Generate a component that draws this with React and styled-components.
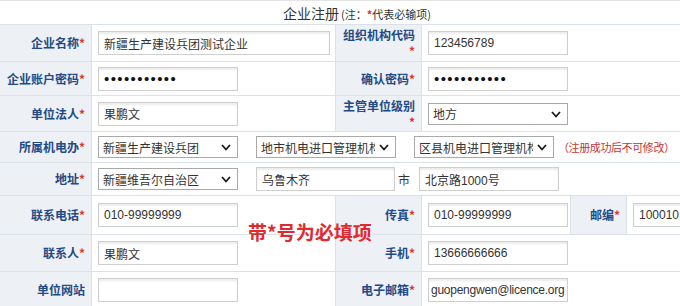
import React from 'react'
import styled, { createGlobalStyle } from 'styled-components'

const GlobalStyle = createGlobalStyle`
  html, body {
    margin: 0;
    padding: 0;
    background: #fff;
  }
  body {
    font-family: "Liberation Sans", "Noto Sans CJK SC", sans-serif;
    font-size: 12px;
    color: #333;
  }
`

const Page = styled.div`
  position: relative;
  width: 680px;
  height: 306px;
  overflow: hidden;
`

const Title = styled.div`
  height: 23px;
  border-top: 1px solid #e4e4e4;
  display: flex;
  align-items: center;
  padding-left: 283px;
  color: #333;
  font-size: 14px;
  font-family: "Noto Sans CJK SC", sans-serif;
`

const TitleNote = styled.span`
  font-size: 11px;
  margin-left: 2px;
  margin-top: 2px;
`

const Star = styled.span`
  color: #e3312d;
  font-weight: bold;
`

const Form = styled.table`
  width: 760px;
  table-layout: fixed;
  border-collapse: collapse;
  margin-left: -1px;
`

const Col = styled.col`
  width: ${p => p.$w}px;
`

const Row = styled.tr`
  height: ${p => p.$h}px;
`

const Label = styled.th`
  background: #edf1f6;
  border: 1px solid #dbe1e8;
  color: #224a86;
  font-family: "Noto Sans CJK SC", sans-serif;
  font-weight: bold;
  font-size: 12px;
  line-height: 16px;
  text-align: right;
  padding: 0 6px;
`

const Field = styled.td`
  border: 1px solid #dbe1e8;
  padding: 0 6px;
  background: #fff;
`

const Inline = styled.div`
  display: flex;
  align-items: center;
`

const TextInput = styled.input`
  box-sizing: border-box;
  display: block;
  width: ${p => p.$w || 140}px;
  height: 24px;
  border: 1px solid #cfcfcf;
  border-radius: 0;
  box-shadow: inset 0 2px 2px rgba(0, 0, 0, 0.08);
  background: #fff;
  padding: 0 ${p => (p.$tight ? 2 : 5)}px;
  font-family: "Liberation Sans", "Noto Sans CJK SC", sans-serif;
  font-size: 12px;
  letter-spacing: ${p => (p.$tight ? -0.25 : 0)}px;
  color: #333;
  outline: none;

  &[type='password'] {
    font-size: 15px;
    letter-spacing: 1.4px;
    color: #111;
  }
`

const SelectWrap = styled.div`
  position: relative;
  width: ${p => p.$w || 140}px;
  height: 22px;
  margin-right: ${p => p.$gap || 0}px;
`

const Select = styled.select`
  appearance: none;
  box-sizing: border-box;
  width: 100%;
  height: 100%;
  border: 1px solid #a9a9a9;
  border-radius: 0;
  background: #fff;
  padding: 0 20px 0 4px;
  font-family: "Noto Sans CJK SC", sans-serif;
  font-size: 12px;
  color: #333;
  outline: none;
`

const Chevron = styled.svg`
  position: absolute;
  right: 7px;
  top: 8px;
  pointer-events: none;
`

const Hint = styled.span`
  color: #c8342c;
  font-family: "Noto Sans CJK SC", sans-serif;
  font-size: 11px;
  letter-spacing: -0.4px;
  margin-left: 4px;
`

const Unit = styled.span`
  font-family: "Noto Sans CJK SC", sans-serif;
  font-size: 12px;
  color: #333;
  margin: 0 9px 0 3px;
`

const Notice = styled.div`
  position: absolute;
  left: 248px;
  top: 218px;
  color: #e12a2e;
  font-family: "Noto Sans CJK SC", sans-serif;
  font-weight: bold;
  font-size: 19px;
  pointer-events: none;
`

const Dropdown = ({ value, w, gap }) => (
  <SelectWrap $w={w} $gap={gap}>
    <Select defaultValue={value}>
      <option>{value}</option>
    </Select>
    <Chevron width="10" height="7" viewBox="0 0 10 7">
      <polyline points="1,1 5,5.5 9,1" fill="none" stroke="#1a1a1a" strokeWidth="1.8" />
    </Chevron>
  </SelectWrap>
)

const Req = ({ children }) => (
  <Label>
    {children}
    <Star>*</Star>
  </Label>
)

export default function App() {
  return (
    <Page>
      <GlobalStyle />
      <Title>
        企业注册
        <TitleNote>
          (注：<Star>*</Star>代表必输项)
        </TitleNote>
      </Title>
      <Form>
        <colgroup>
          <Col $w={92} />
          <Col $w={244} />
          <Col $w={86} />
          <Col $w={149} />
          <Col $w={56} />
          <Col $w={133} />
        </colgroup>
        <tbody>
          <Row $h={37}>
            <Req>企业名称</Req>
            <Field>
              <TextInput $w={232} defaultValue="新疆生产建设兵团测试企业" />
            </Field>
            <Req>组织机构代码</Req>
            <Field colSpan={3}>
              <TextInput defaultValue="123456789" />
            </Field>
          </Row>
          <Row $h={34}>
            <Req>企业账户密码</Req>
            <Field>
              <TextInput type="password" defaultValue="12345678901" />
            </Field>
            <Req>确认密码</Req>
            <Field colSpan={3}>
              <TextInput type="password" defaultValue="12345678901" />
            </Field>
          </Row>
          <Row $h={36}>
            <Req>单位法人</Req>
            <Field>
              <TextInput defaultValue="果鹏文" />
            </Field>
            <Req>主管单位级别</Req>
            <Field colSpan={3}>
              <Dropdown value="地方" />
            </Field>
          </Row>
          <Row $h={31}>
            <Req>所属机电办</Req>
            <Field colSpan={5}>
              <Inline>
                <Dropdown value="新疆生产建设兵团" gap={18} />
                <Dropdown value="地市机电进口管理机构" gap={18} />
                <Dropdown value="区县机电进口管理机构" />
                <Hint>（注册成功后不可修改）</Hint>
              </Inline>
            </Field>
          </Row>
          <Row $h={33}>
            <Req>地址</Req>
            <Field colSpan={5}>
              <Inline>
                <Dropdown value="新疆维吾尔自治区" gap={18} />
                <TextInput $w={139} defaultValue="乌鲁木齐" />
                <Unit>市</Unit>
                <TextInput defaultValue="北京路1000号" />
              </Inline>
            </Field>
          </Row>
          <Row $h={39}>
            <Req>联系电话</Req>
            <Field>
              <TextInput defaultValue="010-99999999" />
            </Field>
            <Req>传真</Req>
            <Field>
              <TextInput defaultValue="010-99999999" />
            </Field>
            <Req>邮编</Req>
            <Field>
              <TextInput defaultValue="100010" />
            </Field>
          </Row>
          <Row $h={37}>
            <Req>联系人</Req>
            <Field>
              <TextInput defaultValue="果鹏文" />
            </Field>
            <Req>手机</Req>
            <Field colSpan={3}>
              <TextInput defaultValue="13666666666" />
            </Field>
          </Row>
          <Row $h={37}>
            <Label>单位网站</Label>
            <Field>
              <TextInput defaultValue="" />
            </Field>
            <Req>电子邮箱</Req>
            <Field colSpan={3}>
              <TextInput $tight defaultValue="guopengwen@licence.org" />
            </Field>
          </Row>
        </tbody>
      </Form>
      <Notice>
        带*号为必填项
      </Notice>
    </Page>
  )
}
